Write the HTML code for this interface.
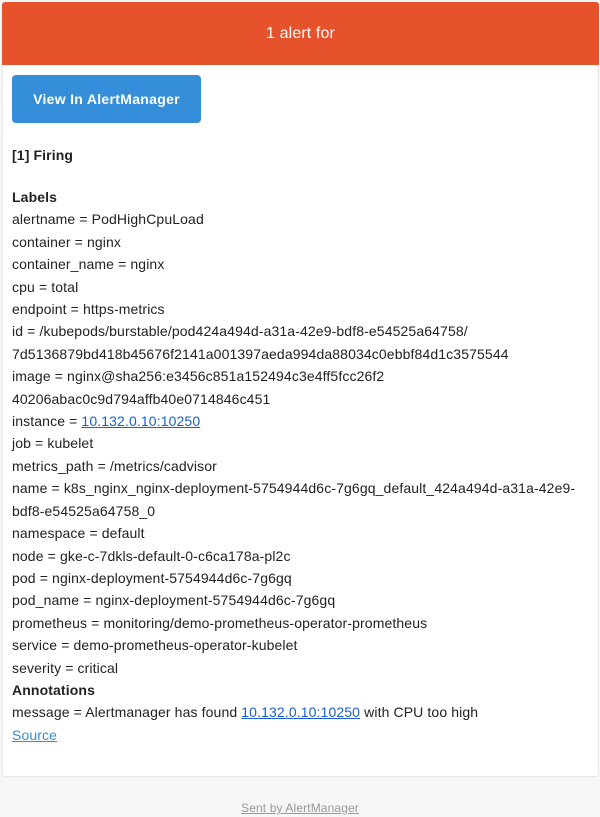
<!DOCTYPE html>
<html><head><meta charset="utf-8"><style>
body{margin:0;background:#f6f6f6;font-family:"Liberation Sans",Arial,sans-serif;color:#222;font-size:14px;width:600px;height:817px;position:relative;overflow:hidden;letter-spacing:0.12px}
.card{position:absolute;left:2px;top:2px;width:597px;height:775px;background:#fff;border:1px solid #e9e9e9;border-radius:3px;box-sizing:border-box}
.hdr{position:absolute;left:2px;top:2px;width:597px;height:63px;background:#e6522c;color:#fff;font-size:16px;text-align:center;line-height:63px;border-radius:3px 3px 0 0}
.btn{position:absolute;left:12px;top:75px;width:189px;height:48px;background:#348eda;border-radius:4px;color:#fff;font-weight:bold;font-size:14px;text-align:center;line-height:48px;letter-spacing:0.3px}
.t{position:absolute;left:12px;white-space:nowrap;line-height:22.4px}
b{font-weight:bold}
a{color:#1a5fcc;text-decoration:underline}
a.s{color:#348eda}
.f{position:absolute;left:0;width:600px;text-align:center;top:801px;font-size:12px;color:#999;text-decoration:underline}
</style></head><body>
<div class="card"></div>
<div class="hdr">1 alert for</div>
<div class="btn">View In AlertManager</div>
<div class="t" style="top:144px"><b>[1] Firing</b></div>
<div class="t" style="top:186px"><b>Labels</b><br>
alertname = PodHighCpuLoad<br>
container = nginx<br>
container_name = nginx<br>
cpu = total<br>
endpoint = https-metrics<br>
id = /kubepods/burstable/pod424a494d-a31a-42e9-bdf8-e54525a64758/<br>
7d5136879bd418b45676f2141a001397aeda994da88034c0ebbf84d1c3575544<br>
image = nginx@sha256:e3456c851a152494c3e4ff5fcc26f2<br>
40206abac0c9d794affb40e0714846c451<br>
instance = <a>10.132.0.10:10250</a><br>
job = kubelet<br>
metrics_path = /metrics/cadvisor<br>
name = k8s_nginx_nginx-deployment-5754944d6c-7g6gq_default_424a494d-a31a-42e9-<br>
bdf8-e54525a64758_0<br>
namespace = default<br>
node = gke-c-7dkls-default-0-c6ca178a-pl2c<br>
pod = nginx-deployment-5754944d6c-7g6gq<br>
pod_name = nginx-deployment-5754944d6c-7g6gq<br>
prometheus = monitoring/demo-prometheus-operator-prometheus<br>
service = demo-prometheus-operator-kubelet<br>
severity = critical<br>
<b>Annotations</b><br>
message = Alertmanager has found <a>10.132.0.10:10250</a> with CPU too high<br>
<a class="s">Source</a></div>
<div class="f">Sent by AlertManager</div>
</body></html>
